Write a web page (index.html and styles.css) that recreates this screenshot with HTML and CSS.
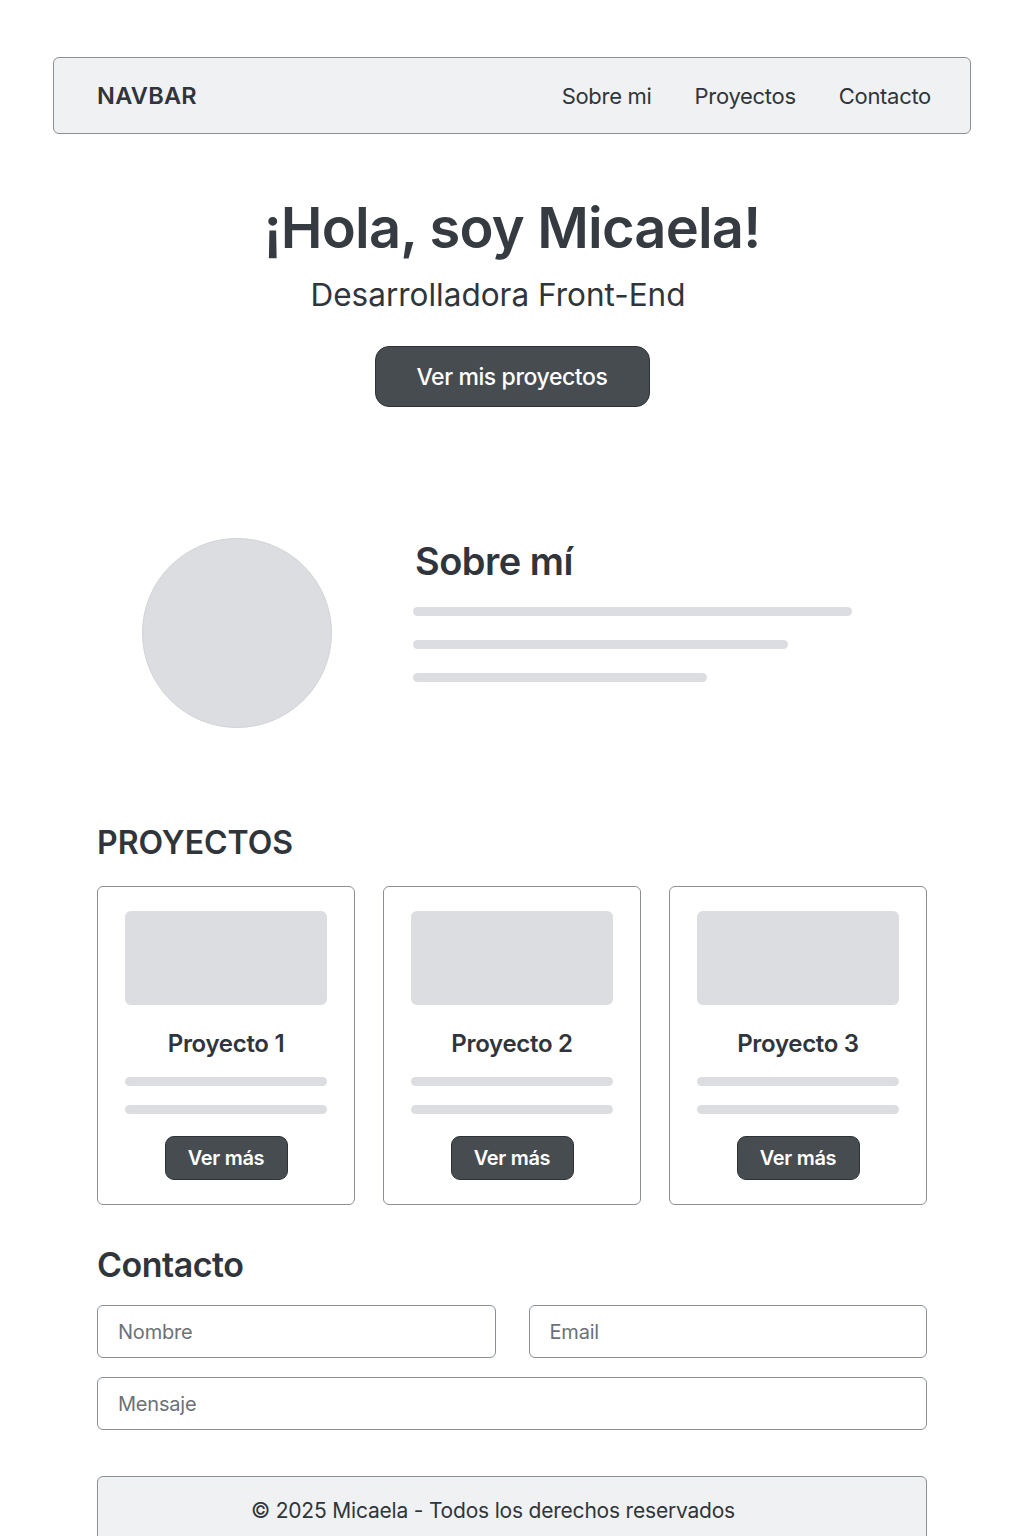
FILE: index.html
```html
<!DOCTYPE html>
<html lang="es">
<head>
<meta charset="utf-8">
<title>Micaela - Portfolio</title>
<link rel="stylesheet" href="styles.css">
</head>
<body>
<div class="page">
  <nav class="navbar">
    <div class="brand">NAVBAR</div>
    <ul class="nav-links">
      <li><a href="#sobre">Sobre mi</a></li>
      <li><a href="#proyectos">Proyectos</a></li>
      <li><a href="#contacto">Contacto</a></li>
    </ul>
  </nav>

  <header class="hero">
    <h1 class="hero-title">¡Hola, soy Micaela!</h1>
    <p class="hero-sub">Desarrolladora Front-End</p>
    <a class="btn btn-lg" href="#proyectos">Ver mis proyectos</a>
  </header>

  <main class="content">
    <section class="about" id="sobre">
      <div class="avatar"></div>
      <div class="about-text">
        <h2 class="about-title">Sobre mí</h2>
        <div class="line line-1"></div>
        <div class="line line-2"></div>
        <div class="line line-3"></div>
      </div>
    </section>

    <section class="projects" id="proyectos">
      <h2 class="section-title upper">PROYECTOS</h2>
      <div class="cards">
        <article class="card">
          <div class="thumb"></div>
          <h3 class="card-title">Proyecto 1</h3>
          <div class="card-line"></div>
          <div class="card-line"></div>
          <a class="btn btn-sm" href="#">Ver más</a>
        </article>
        <article class="card">
          <div class="thumb"></div>
          <h3 class="card-title">Proyecto 2</h3>
          <div class="card-line"></div>
          <div class="card-line"></div>
          <a class="btn btn-sm" href="#">Ver más</a>
        </article>
        <article class="card">
          <div class="thumb"></div>
          <h3 class="card-title">Proyecto 3</h3>
          <div class="card-line"></div>
          <div class="card-line"></div>
          <a class="btn btn-sm" href="#">Ver más</a>
        </article>
      </div>
    </section>

    <section class="contact" id="contacto">
      <h2 class="section-title">Contacto</h2>
      <form class="form">
        <input class="field" type="text" placeholder="Nombre">
        <input class="field" type="email" placeholder="Email">
        <input class="field field-wide" type="text" placeholder="Mensaje">
      </form>
    </section>

    <footer class="footer">
      <p>© 2025 Micaela - Todos los derechos reservados</p>
    </footer>
  </main>
</div>
</body>
</html>
```
FILE: styles.css
```css
* { box-sizing: border-box; }

html, body {
  margin: 0;
  padding: 0;
  background: #ffffff;
}

body {
  font-family: Inter, "Noto Sans", "Liberation Sans", sans-serif;
  color: #2f353a;
}

.page {
  padding-top: 57px;
}

/* NAVBAR */
.navbar {
  margin: 0 53px 0 53px;
  height: 77px;
  background: #f0f1f2;
  border: 1px solid #8b9095;
  border-radius: 6px;
  display: flex;
  align-items: center;
  justify-content: space-between;
  padding: 0 39px 0 43px;
}

.brand {
  font-size: 23.5px;
  font-weight: 600;
  letter-spacing: 0.3px;
  color: #2f353a;
}

.nav-links {
  list-style: none;
  margin: 0;
  padding: 0;
  display: flex;
  gap: 43px;
}

.nav-links a {
  color: #2f353a;
  text-decoration: none;
  font-size: 22px;
  letter-spacing: -0.3px;
}

/* HERO */
.hero {
  display: flex;
  flex-direction: column;
  align-items: center;
  margin-top: 62px;
}

.hero-title {
  margin: 0;
  font-size: 56px;
  line-height: 65px;
  font-weight: 600;
  letter-spacing: -0.8px;
  color: #353b40;
}

.hero-sub {
  margin: 16px 28px 0 0;
  font-size: 31.5px;
  line-height: 36px;
  font-weight: 400;
  color: #2f353a;
}

.btn {
  display: inline-flex;
  align-items: center;
  justify-content: center;
  background: #474c50;
  border: 1px solid #2e3236;
  color: #ffffff;
  text-decoration: none;
  font-weight: 500;
}

.btn-lg {
  margin-top: 33px;
  width: 275px;
  height: 61px;
  border-radius: 14px;
  font-size: 23px;
  letter-spacing: -0.4px;
}

/* CONTENT */
.content {
  margin: 0 97px;
}

.about {
  margin-top: 131px;
  display: flex;
  align-items: flex-start;
  padding-left: 45px;
}

.avatar {
  width: 190px;
  height: 190px;
  border-radius: 50%;
  background: #dcdde0;
  border: 1px solid #d2d3d6;
  flex: none;
}

.about-text {
  margin-left: 81px;
  padding-top: 0;
  flex: 1;
}

.about-title {
  margin: 0 0 0 2px;
  font-size: 38px;
  line-height: 46px;
  font-weight: 600;
  letter-spacing: -0.5px;
  color: #2f353a;
}

.line {
  height: 9px;
  border-radius: 5px;
  background: #dcdde0;
}

.line-1 { width: 439px; margin-top: 23px; }
.line-2 { width: 375px; margin-top: 24px; }
.line-3 { width: 294px; margin-top: 24px; }

/* PROJECTS */
.projects {
  margin-top: 96px;
}

.section-title {
  margin: 0;
  font-size: 34px;
  line-height: 40px;
  font-weight: 600;
  letter-spacing: -0.5px;
  color: #2f353a;
}

.section-title.upper {
  font-size: 32px;
  line-height: 38px;
  letter-spacing: 0;
}

.cards {
  margin-top: 24px;
  display: grid;
  grid-template-columns: repeat(3, 1fr);
  gap: 28px;
}

.card {
  border: 1px solid #8b9095;
  border-radius: 6px;
  padding: 24px 27px 24px;
  display: flex;
  flex-direction: column;
  align-items: center;
  height: 319px;
}

.thumb {
  width: 100%;
  height: 95px;
  border-radius: 6px;
  background: #dcdde0;
}

.card-title {
  margin: 24px 0 0;
  font-size: 24px;
  line-height: 30px;
  font-weight: 600;
  letter-spacing: -0.3px;
  color: #2f353a;
}

.card-line {
  width: 100%;
  height: 9px;
  border-radius: 5px;
  background: #dcdde0;
  margin-top: 18px;
}

.card-line + .card-line {
  margin-top: 19px;
}

.btn-sm {
  margin-top: 22px;
  width: 123px;
  height: 44px;
  border-radius: 9px;
  font-size: 20px;
  font-weight: 600;
  letter-spacing: -0.3px;
}

/* CONTACT */
.contact {
  margin-top: 40px;
}

.form {
  margin-top: 20px;
  display: grid;
  grid-template-columns: 1fr 1fr;
  column-gap: 33px;
  row-gap: 19px;
}

.field {
  height: 53px;
  border: 1px solid #8b9095;
  border-radius: 6px;
  padding: 0 20px;
  font-family: Inter, "Noto Sans", "Liberation Sans", sans-serif;
  font-size: 20px;
  color: #2f353a;
  background: #ffffff;
  outline: none;
}

.field::placeholder {
  color: #6c7176;
  letter-spacing: -0.2px;
}

.field-wide {
  grid-column: 1 / 3;
}

/* FOOTER */
.footer {
  margin-top: 46px;
  height: 80px;
  background: #f0f1f2;
  border: 1px solid #8b9095;
  border-radius: 6px 6px 0 0;
  display: flex;
  justify-content: center;
  padding-top: 21px;
  padding-right: 38px;
}

.footer p {
  margin: 0;
  font-size: 21px;
  line-height: 26px;
  color: #2f353a;
  letter-spacing: -0.2px;
}
```
